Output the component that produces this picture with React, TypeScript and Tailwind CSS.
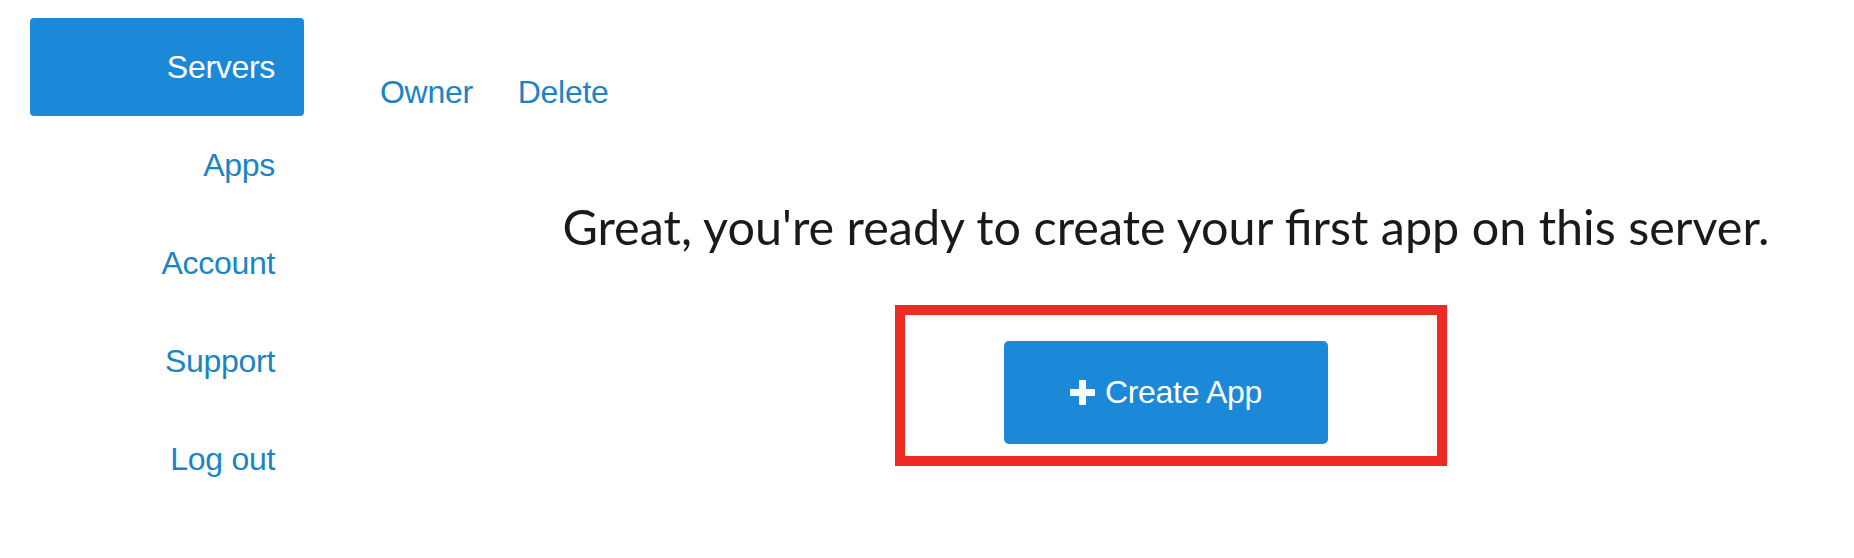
const navItems = ["Servers", "Apps", "Account", "Support", "Log out"];

function PlusMark() {
  return (
    <svg width="25" height="25" viewBox="0 0 25 25" aria-hidden="true">
      <rect x="9" y="0" width="7" height="25" rx="1" fill="currentColor" />
      <rect x="0" y="9" width="25" height="7" rx="1" fill="currentColor" />
    </svg>
  );
}

export default function App() {
  return (
    <div className="min-h-screen bg-white flex font-['Liberation_Sans',Arial,sans-serif]">
      {/* sidebar */}
      <nav className="w-[304px] shrink-0 pl-[30px] pt-[18px] flex flex-col">
        {navItems.map((item, i) => (
          <a
            key={item}
            href="#"
            className={
              i === 0
                ? "h-[98px] flex items-center justify-end pr-[29px] rounded-[4px] bg-[#1b88d8] text-white text-[32px] tracking-[-0.3px]"
                : "h-[98px] flex items-center justify-end pr-[29px] text-[#1a84c4] text-[32px] tracking-[-0.3px]"
            }
          >
            {item}
          </a>
        ))}
      </nav>

      {/* main */}
      <main className="flex-1 flex flex-col">
        <div className="flex gap-[45px] pl-[76px] pt-[76px] text-[32px] text-[#1a84c4] tracking-[-0.3px] leading-none">
          <a href="#">Owner</a>
          <a href="#">Delete</a>
        </div>

        <div className="ml-[226px] w-[1272px] flex flex-col items-center">
          <h1 className="mt-[94px] text-[48.5px] leading-none text-[#1a1a1a] font-['Lato','Open_Sans',sans-serif]">
            Great, you're ready to create your first app on this server.
          </h1>

          <div className="mt-[54px] ml-[10px] border-[10px] border-[#ee2a24] w-[552px] h-[161px] flex justify-center pt-[26px] pr-[10px]">
            <button className="w-[324px] h-[103px] rounded-[5px] bg-[#1b88d8] text-white text-[32px] tracking-[-0.3px] flex items-center justify-center gap-[10px]">
              <PlusMark />
              Create App
            </button>
          </div>
        </div>
      </main>
    </div>
  );
}
